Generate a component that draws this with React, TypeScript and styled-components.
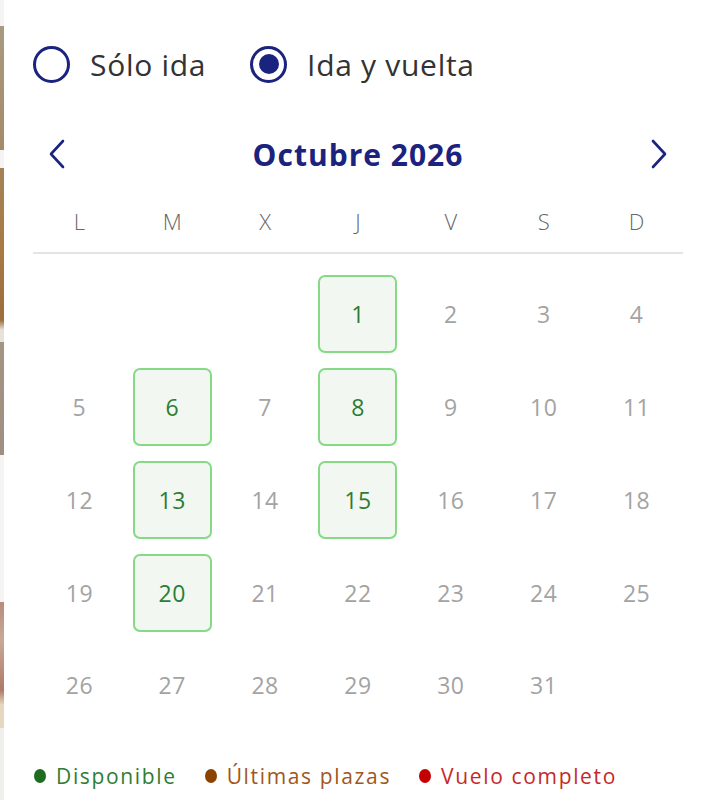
import React from "react";
import styled, { createGlobalStyle } from "styled-components";

const Global = createGlobalStyle`
  html, body { margin: 0; padding: 0; background: #ffffff; }
  body { font-family: "Open Sans", "DejaVu Sans", sans-serif; }
`;

const NAVY = "#1a237e";

const Page = styled.div`
  display: flex;
  width: 703px;
  height: 800px;
  overflow: hidden;
  background: #fff;
`;

const Strip = styled.div`
  width: 4px;
  flex: none;
  height: 800px;
  background: linear-gradient(
    to bottom,
    #f4f4f4 0px, #f4f4f4 26px,
    #a89a80 26px, #a68a68 150px,
    #f4f4f4 150px, #f4f4f4 168px,
    #a58256 168px, #a87a44 250px, #9d6e3e 320px,
    #e8e2d8 330px, #e8e2d8 342px,
    #a49484 342px, #a08f80 455px,
    #f5f4f3 455px, #f5f4f3 602px,
    #b88c7c 602px, #c9a898 640px, #b07a68 690px,
    #e6d7c0 705px, #e6d7c0 728px,
    #f1efec 728px, #f1efec 800px
  );
`;

const Content = styled.div`
  width: 650px;
  margin-left: 29px;
  display: flex;
  flex-direction: column;
`;

const RadioGroup = styled.div`
  display: flex;
  align-items: center;
  gap: 44px;
  height: 40px;
  margin-top: 44px;
`;

const RadioOption = styled.label`
  display: flex;
  align-items: center;
  gap: 20px;
  font-size: 30px;
  letter-spacing: 0.7px;
  color: #333333;
  cursor: pointer;
`;

const RadioCircle = styled.span<{ $checked?: boolean }>`
  width: 37px;
  height: 37px;
  flex: none;
  box-sizing: border-box;
  border: 3.5px solid ${NAVY};
  border-radius: 50%;
  display: flex;
  align-items: center;
  justify-content: center;
  &::after {
    content: "";
    display: ${(p) => (p.$checked ? "block" : "none")};
    width: 20px;
    height: 20px;
    border-radius: 50%;
    background: ${NAVY};
  }
`;

const Header = styled.div`
  display: flex;
  align-items: center;
  justify-content: space-between;
  height: 50px;
  margin-top: 45px;
`;

const NavButton = styled.button`
  width: 50px;
  height: 50px;
  border: none;
  background: none;
  padding: 0;
  display: flex;
  align-items: center;
  justify-content: center;
  cursor: pointer;
`;

const Title = styled.h2`
  margin: 0;
  font-size: 30px;
  letter-spacing: 1px;
  font-weight: 700;
  color: ${NAVY};
`;

const WeekRow = styled.div`
  display: grid;
  grid-template-columns: repeat(7, 1fr);
  height: 42px;
  margin-top: 31px;
  border-bottom: 2px solid #e4e4e4;
`;

const WeekDay = styled.div`
  display: flex;
  align-items: flex-start;
  justify-content: center;
  font-size: 22px;
  font-weight: 300;
  color: #666666;
  line-height: 22px;
`;

const DaysGrid = styled.div`
  display: grid;
  grid-template-columns: repeat(7, 1fr);
  grid-auto-rows: 92.75px;
  margin-top: 14px;
`;

const DayCell = styled.div`
  display: flex;
  align-items: center;
  justify-content: center;
`;

const DayBox = styled.div<{ $available?: boolean }>`
  width: 79px;
  height: 78px;
  box-sizing: border-box;
  display: flex;
  align-items: center;
  justify-content: center;
  border-radius: 7px;
  font-size: 23px;
  letter-spacing: 0.5px;
  border: 2px solid ${(p) => (p.$available ? "#86da86" : "transparent")};
  background: ${(p) => (p.$available ? "#f2f7f2" : "transparent")};
  color: ${(p) => (p.$available ? "#2e7d32" : "#a3a3a3")};
  cursor: ${(p) => (p.$available ? "pointer" : "default")};
`;

const Legend = styled.div`
  display: flex;
  align-items: center;
  gap: 28px;
  margin-top: 30px;
  margin-left: 1px;
`;

const LegendItem = styled.div<{ $color: string; $dot: string }>`
  display: flex;
  align-items: center;
  gap: 10px;
  font-size: 21px;
  letter-spacing: 1.65px;
  color: ${(p) => p.$color};
  &::before {
    content: "";
    width: 12px;
    height: 14px;
    border-radius: 50%;
    background: ${(p) => p.$dot};
  }
`;

const Chevron = ({ dir }: { dir: "left" | "right" }) => (
  <svg width="20" height="30" viewBox="0 0 20 30" fill="none">
    <path
      d={dir === "left" ? "M15 2 L3 15 L15 28" : "M5 2 L17 15 L5 28"}
      stroke={NAVY}
      strokeWidth="2.6"
      strokeLinecap="round"
      strokeLinejoin="round"
    />
  </svg>
);

const weekDays = ["L", "M", "X", "J", "V", "S", "D"];
const available = new Set([1, 6, 8, 13, 15, 20]);
const offset = 3; // October 1st 2026 is Thursday

export default function App() {
  const cells: (number | null)[] = [];
  for (let i = 0; i < offset; i++) cells.push(null);
  for (let d = 1; d <= 31; d++) cells.push(d);

  return (
    <Page>
      <Global />
      <Strip />
      <Content>
        <RadioGroup>
          <RadioOption>
            <RadioCircle />
            Sólo ida
          </RadioOption>
          <RadioOption>
            <RadioCircle $checked />
            Ida y vuelta
          </RadioOption>
        </RadioGroup>
        <Header>
          <NavButton aria-label="Mes anterior">
            <Chevron dir="left" />
          </NavButton>
          <Title>Octubre 2026</Title>
          <NavButton aria-label="Mes siguiente">
            <Chevron dir="right" />
          </NavButton>
        </Header>
        <WeekRow>
          {weekDays.map((w) => (
            <WeekDay key={w}>{w}</WeekDay>
          ))}
        </WeekRow>
        <DaysGrid>
          {cells.map((d, i) => (
            <DayCell key={i}>
              {d !== null && <DayBox $available={available.has(d)}>{d}</DayBox>}
            </DayCell>
          ))}
        </DaysGrid>
        <Legend>
          <LegendItem $color="#2e7d32" $dot="#1f6b1f">Disponible</LegendItem>
          <LegendItem $color="#a0561c" $dot="#8a4300">Últimas plazas</LegendItem>
          <LegendItem $color="#c62828" $dot="#c40000">Vuelo completo</LegendItem>
        </Legend>
      </Content>
    </Page>
  );
}
